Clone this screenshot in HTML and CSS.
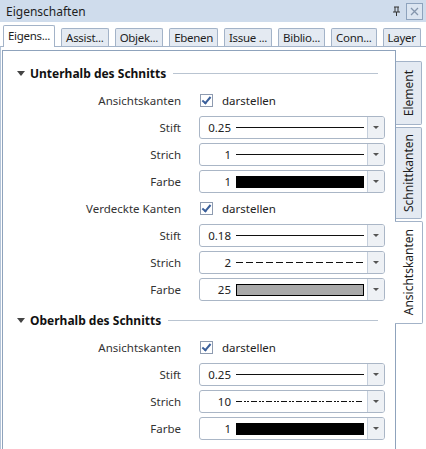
FILE: index.html
```html
<!DOCTYPE html>
<html lang="de">
<head>
    <meta charset="UTF-8">
    <title>Eigenschaften</title>
    <link rel="stylesheet" href="styles.css">
</head>
<body>
    <div class="titlebar">
        <span class="title">Eigenschaften</span>
        <div class="title-btns">
            <svg class="pin" width="9" height="11" viewBox="0 0 9 11">
                <path d="M2 1h5M3 1v5M6 1v5M1 6h7M4.5 6v4" stroke="#333" stroke-width="1" fill="none"/>
            </svg>
            <span class="close">
                <svg width="9" height="9" viewBox="0 0 9 9">
                    <path d="M1 1l7 7M8 1l-7 7" stroke="#8496ad" stroke-width="1.3"/>
                </svg>
            </span>
        </div>
    </div>

    <div class="tabs">
        <div class="tab active">Eigens...</div>
        <div class="tab">Assist...</div>
        <div class="tab">Objek...</div>
        <div class="tab">Ebenen</div>
        <div class="tab">Issue ...</div>
        <div class="tab">Biblio...</div>
        <div class="tab">Conn...</div>
        <div class="tab">Layer</div>
    </div>

    <div class="page">
        <div class="pane">
            <!-- Unterhalb -->
            <div class="section-head">
                <span class="arrow"></span>
                <span class="section-title">Unterhalb des Schnitts</span>
                <span class="rule"></span>
            </div>
            <div class="grid">
                <label class="lbl">Ansichtskanten</label>
                <div class="check-row"><span class="check"></span>darstellen</div>

                <label class="lbl">Stift</label>
                <div class="combo">
                    <div class="val"><span class="num">0.25</span><span class="sample solid"></span></div>
                    <div class="drop"><span class="tri"></span></div>
                </div>

                <label class="lbl">Strich</label>
                <div class="combo">
                    <div class="val"><span class="num">1</span><span class="sample solid"></span></div>
                    <div class="drop"><span class="tri"></span></div>
                </div>

                <label class="lbl">Farbe</label>
                <div class="combo">
                    <div class="val"><span class="num">1</span><span class="sample fill black"></span></div>
                    <div class="drop"><span class="tri"></span></div>
                </div>

                <label class="lbl">Verdeckte Kanten</label>
                <div class="check-row"><span class="check"></span>darstellen</div>

                <label class="lbl">Stift</label>
                <div class="combo">
                    <div class="val"><span class="num">0.18</span><span class="sample solid"></span></div>
                    <div class="drop"><span class="tri"></span></div>
                </div>

                <label class="lbl">Strich</label>
                <div class="combo">
                    <div class="val"><span class="num">2</span><span class="sample dashed"></span></div>
                    <div class="drop"><span class="tri"></span></div>
                </div>

                <label class="lbl">Farbe</label>
                <div class="combo">
                    <div class="val"><span class="num">25</span><span class="sample fill grey"></span></div>
                    <div class="drop"><span class="tri"></span></div>
                </div>
            </div>

            <!-- Oberhalb -->
            <div class="section-head second">
                <span class="arrow"></span>
                <span class="section-title">Oberhalb des Schnitts</span>
                <span class="rule"></span>
            </div>
            <div class="grid">
                <label class="lbl">Ansichtskanten</label>
                <div class="check-row"><span class="check"></span>darstellen</div>

                <label class="lbl">Stift</label>
                <div class="combo">
                    <div class="val"><span class="num">0.25</span><span class="sample solid"></span></div>
                    <div class="drop"><span class="tri"></span></div>
                </div>

                <label class="lbl">Strich</label>
                <div class="combo">
                    <div class="val"><span class="num">10</span><span class="sample dashdot"></span></div>
                    <div class="drop"><span class="tri"></span></div>
                </div>

                <label class="lbl">Farbe</label>
                <div class="combo">
                    <div class="val"><span class="num">1</span><span class="sample fill black"></span></div>
                    <div class="drop"><span class="tri"></span></div>
                </div>
            </div>
        </div>

        <div class="side">
            <div class="vtab element"><span>Element</span></div>
            <div class="vtab schnitt"><span>Schnittkanten</span></div>
            <div class="vtab ansicht active"><span>Ansichtskanten</span></div>
        </div>
    </div>
</body>
</html>
```

FILE: styles.css
```css
body {
    margin: 0;
    width: 426px;
    height: 449px;
    overflow: hidden;
    background: #fff;
    font-family: "Noto Sans", "Open Sans", sans-serif;
    font-size: 11.5px;
    color: #2b2b2b;
}
.titlebar {
    height: 22px;
    background-color: #cfdcec;
    display: flex;
    align-items: center;
    justify-content: space-between;
    padding: 0 3px 0 6px;
}
.title {
    font-size: 12px;
    color: #1e1e1e;
}
.title-btns {
    display: flex;
    align-items: center;
    gap: 4px;
}
.pin {
    margin-right: 1px;
}
.close {
    width: 15px;
    height: 15px;
    border: 1px solid #8ea3bd;
    background: #dbe5f1;
    display: flex;
    align-items: center;
    justify-content: center;
}
.tabs {
    height: 24px;
    display: flex;
    align-items: flex-end;
    gap: 6px;
    padding-left: 3px;
}
.tab {
    height: 18px;
    line-height: 17px;
    padding: 0 4px;
    background-color: #e4eaf2;
    border: 1px solid #a3b3c8;
    border-bottom: none;
    border-radius: 2px 2px 0 0;
    box-sizing: border-box;
    font-size: 11.5px;
    letter-spacing: -0.3px;
    white-space: nowrap;
    color: #1e1e1e;
}
.tab.active {
    height: 22px;
    line-height: 20px;
    background: #fff;
    margin-bottom: -1px;
    position: relative;
    z-index: 1;
}
.page {
    border-top: 1px solid #a3b3c8;
    border-left: 1px solid #b4c4d8;
    height: 403px;
    box-sizing: border-box;
    display: flex;
    padding: 3px 0 0 1px;
}
.pane {
    width: 394px;
    border: 1px solid #8fa3bc;
    border-bottom: none;
    padding-top: 12px;
    box-sizing: border-box;
}
.section-head {
    height: 20px;
    display: flex;
    align-items: center;
    padding-left: 14px;
    margin-right: 17px;
    margin-bottom: 6px;
}
.section-head.second {
    margin-top: 9px;
}
.arrow {
    width: 0;
    height: 0;
    border-left: 4px solid transparent;
    border-right: 4px solid transparent;
    border-top: 5px solid #444;
    margin-right: 5px;
}
.section-title {
    font-weight: bold;
    font-size: 12px;
    color: #111;
}
.rule {
    flex: 1;
    height: 1px;
    background: #b9c4d1;
    margin-left: 7px;
}
.grid {
    display: grid;
    grid-template-columns: 178px 186px;
    grid-auto-rows: 23px;
    column-gap: 18px;
    row-gap: 4px;
}
.lbl {
    text-align: right;
    align-self: center;
    color: #333;
}
.check-row {
    display: flex;
    align-items: center;
    padding-left: 1px;
    color: #222;
}
.check {
    width: 13px;
    height: 13px;
    box-sizing: border-box;
    border: 1px solid #8e9bb0;
    margin-right: 9px;
    position: relative;
}
.check::after {
    content: "";
    position: absolute;
    left: 3px;
    top: 0px;
    width: 3px;
    height: 7px;
    border-right: 2px solid #3a5f9a;
    border-bottom: 2px solid #3a5f9a;
    transform: rotate(40deg);
}
.combo {
    display: flex;
    border: 1px solid #aab6c6;
    border-radius: 3px;
    box-sizing: border-box;
    background: #fff;
}
.val {
    flex: 1;
    display: flex;
    align-items: center;
    padding-left: 5px;
}
.num {
    width: 26px;
    text-align: right;
    color: #222;
}
.sample {
    width: 128px;
    margin-left: 5px;
}
.solid {
    height: 1px;
    background: #111;
}
.dashed {
    height: 1px;
    background: repeating-linear-gradient(to right, #111 0 7px, transparent 7px 10px);
}
.dashdot {
    height: 1px;
    background: repeating-linear-gradient(to right, #111 0 6px, transparent 6px 8px, #111 8px 10px, transparent 10px 11px, #111 11px 13px, transparent 13px 15px);
}
.fill {
    height: 12px;
    box-sizing: border-box;
    border: 1px solid #000;
}
.black {
    background: #000;
}
.grey {
    background: #a9a9a9;
}
.drop {
    width: 16px;
    border-left: 1px solid #c5cfdc;
    background: #eef1f5;
    border-radius: 0 2px 2px 0;
    display: flex;
    align-items: center;
    justify-content: center;
}
.tri {
    width: 0;
    height: 0;
    border-left: 3px solid transparent;
    border-right: 3px solid transparent;
    border-top: 3px solid #555;
}
.side {
    width: 30px;
    padding-top: 11px;
    display: flex;
    flex-direction: column;
    gap: 2px;
}
.vtab {
    width: 26px;
    box-sizing: border-box;
    background: #e4eaf2;
    border: 1px solid #a3b3c8;
    border-left: none;
    border-radius: 0 2px 2px 0;
    display: flex;
    align-items: center;
    justify-content: center;
    font-size: 12px;
    color: #1e1e1e;
}
.vtab span {
    writing-mode: vertical-rl;
    transform: rotate(180deg);
}
.element {
    height: 64px;
}
.schnitt {
    height: 92px;
}
.ansicht {
    height: 103px;
}
.vtab.active {
    background: #fff;
    width: 28px;
    margin-left: -1px;
}
```
